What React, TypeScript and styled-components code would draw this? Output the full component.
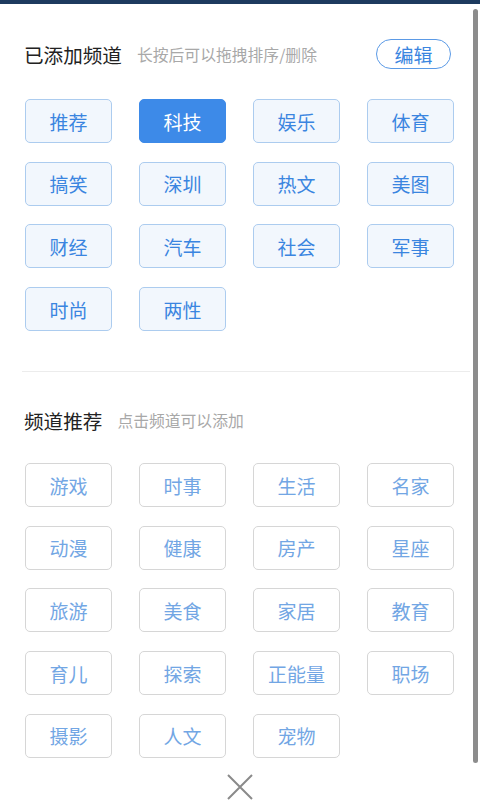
import React from "react";
import styled, { createGlobalStyle } from "styled-components";

const Global = createGlobalStyle`
  html, body { margin: 0; padding: 0; background: #fff; }
  body { font-family: "Noto Sans CJK SC", "Noto Sans", sans-serif; }
  * { box-sizing: border-box; }
`;

const Page = styled.div`
  position: relative;
  width: 480px;
  height: 800px;
  overflow: hidden;
  background: #fff;
  border-top: 4px solid #1d3a5f;
`;

const ScrollBar = styled.div`
  position: absolute;
  right: 2px;
  top: 5px;
  width: 5px;
  height: 754px;
  border-radius: 3px;
  background: #8c8c8c;
`;

const Section = styled.section<{ $top: number }>`
  padding: ${(p) => p.$top}px 0 0 25px;
`;

const Header = styled.div`
  display: flex;
  align-items: center;
  height: 30px;
  padding-right: 29px;
`;

const Title = styled.span`
  font-size: 19.6px;
  color: #222;
  margin-left: -1px;
`;

const Hint = styled.span`
  font-size: 15.8px;
  color: #a8a8a8;
  margin-left: 15px;
  flex: 1;
`;

const EditButton = styled.button`
  width: 75px;
  height: 30px;
  border: 1px solid #5b9ae6;
  border-radius: 15px;
  background: #fff;
  color: #3a85e0;
  font-family: inherit;
  font-size: 19px;
  line-height: 1;
  padding: 0;
`;

const Grid = styled.div<{ $mt: number }>`
  display: grid;
  grid-template-columns: repeat(4, 87px);
  column-gap: 27px;
  row-gap: 18.7px;
  margin-top: ${(p) => p.$mt}px;
`;

const Chip = styled.div<{ $kind: "added" | "active" | "rec" }>`
  height: 44px;
  border-radius: 5px;
  display: flex;
  align-items: center;
  justify-content: center;
  font-size: 19px;
  border: 1px solid
    ${(p) =>
      p.$kind === "active" ? "#3d8ae8" : p.$kind === "added" ? "#acccef" : "#d6d6d6"};
  background: ${(p) =>
    p.$kind === "active" ? "#3d8ae8" : p.$kind === "added" ? "#f2f7fd" : "#fff"};
  color: ${(p) =>
    p.$kind === "active" ? "#fff" : p.$kind === "added" ? "#3a85e0" : "#72a6e4"};
`;

const Divider = styled.hr`
  border: none;
  border-top: 1px solid #ececec;
  margin: 40px 10px 0 22px;
`;

const CloseRow = styled.div`
  display: flex;
  justify-content: center;
  margin-top: 15px;
`;

const added = ["推荐", "科技", "娱乐", "体育", "搞笑", "深圳", "热文", "美图", "财经", "汽车", "社会", "军事", "时尚", "两性"];
const recommended = ["游戏", "时事", "生活", "名家", "动漫", "健康", "房产", "星座", "旅游", "美食", "家居", "教育", "育儿", "探索", "正能量", "职场", "摄影", "人文", "宠物"];

export default function App() {
  return (
    <Page>
      <Global />
      <Section $top={35}>
        <Header>
          <Title>已添加频道</Title>
          <Hint>长按后可以拖拽排序/删除</Hint>
          <EditButton>编辑</EditButton>
        </Header>
        <Grid $mt={30}>
          {added.map((n) => (
            <Chip key={n} $kind={n === "科技" ? "active" : "added"}>
              {n}
            </Chip>
          ))}
        </Grid>
      </Section>
      <Divider />
      <Section $top={33}>
        <Header>
          <Title>频道推荐</Title>
          <Hint>点击频道可以添加</Hint>
        </Header>
        <Grid $mt={28}>
          {recommended.map((n) => (
            <Chip key={n} $kind="rec">
              {n}
            </Chip>
          ))}
        </Grid>
      </Section>
      <CloseRow>
        <svg width="28" height="28" viewBox="0 0 28 28">
          <path d="M2 2 L26 26 M26 2 L2 26" stroke="#8a8a8a" strokeWidth="2" />
        </svg>
      </CloseRow>
      <ScrollBar />
    </Page>
  );
}
